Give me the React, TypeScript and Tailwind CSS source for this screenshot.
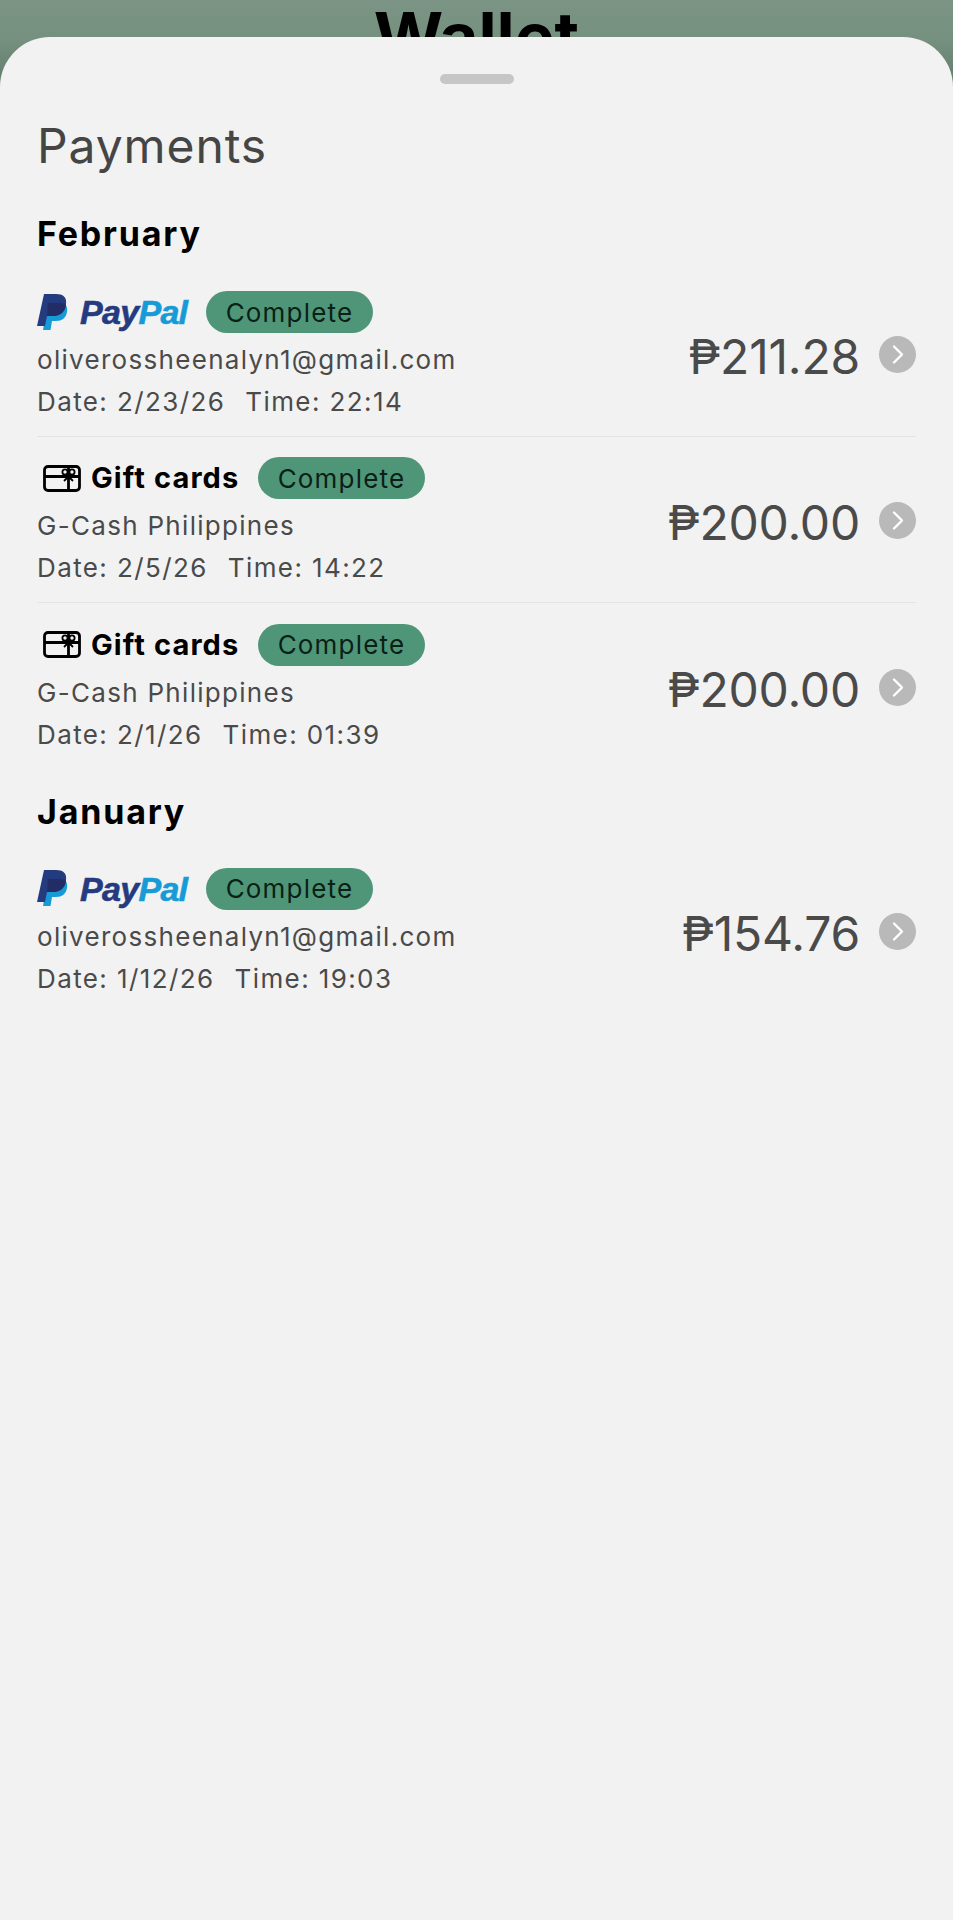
import React from "react";

const font = { fontFamily: "Inter, Roboto, 'Noto Sans', sans-serif" };

function PayPalLogo() {
  return (
    <div className="flex items-center w-[150px] h-[38px] shrink-0">
      <svg width="32" height="37" viewBox="0 0 32 37" className="shrink-0">
        <path d="M11 9h12c5 0 8 3 7 9-1 6-5 9-11 9h-4l-1.500 9H6z" fill="#179bd7" />
        <path d="M7 0h12c7 0 11 3 10 10-1 8-6 12-13 12h-6l-2 10H0z" fill="#253b80" />
        <path d="M11 9h12c3 0 5 1 6 2-1 7-6 11-13 11h-6z" fill="#222d65" />
      </svg>
      <span className="ml-[11px] text-[34px] leading-none font-bold italic tracking-[-0.7px] font-['Liberation_Sans'] [-webkit-text-stroke:0.6px_currentColor]">
        <span className="text-[#253b80]">Pay</span>
        <span className="text-[#179bd7]">Pal</span>
      </span>
    </div>
  );
}

function GiftIcon() {
  return (
    <svg width="38" height="27" viewBox="0 0 38 27" fill="none" stroke="#000" strokeWidth="2.800" className="shrink-0">
      <rect x="1.500" y="1.500" width="35" height="24" rx="3.500" />
      <path d="M1.500 11.500H36.500M25.500 1.500V25.500" />
      <circle cx="22" cy="7" r="2.600" strokeWidth="1.800" />
      <circle cx="29" cy="7" r="2.600" strokeWidth="1.800" />
      <path d="M25.500 11.500l-4.500 4.500M25.500 11.500l4.500 4.500" strokeWidth="1.800" />
    </svg>
  );
}

function Badge() {
  return (
    <span className="flex items-center justify-center w-[167px] h-[42px] rounded-[21px] bg-[#4f9678] text-[#0b1f17] text-[26px] tracking-[1.2px] shrink-0">
      Complete
    </span>
  );
}

function Chevron() {
  return (
    <span className="flex items-center justify-center w-[37px] h-[37px] rounded-full bg-[#b9b9b9] shrink-0">
      <svg width="37" height="37" viewBox="0 0 37 37" fill="none" stroke="#fff" strokeWidth="2.400" strokeLinecap="round" strokeLinejoin="round">
        <path d="M15 10.500l8 8-8 8" />
      </svg>
    </span>
  );
}

type Row = { kind: "paypal" | "gift"; sub: string; date: string; time: string; amount: string };

function PaymentRow({ row, divider }: { row: Row; divider: boolean }) {
  return (
    <div className={`flex items-center h-[166px] ${divider ? "border-b border-[#e4e4e4]" : ""}`}>
      <div className="flex-1 min-w-0 pt-[4px]">
        <div className="flex items-center h-[42px]">
          {row.kind === "paypal" ? (
            <div className="flex items-center gap-[19px]">
              <PayPalLogo />
              <Badge />
            </div>
          ) : (
            <div className="flex items-center">
              <span className="ml-[6px]"><GiftIcon /></span>
              <span className="ml-[10px] text-[29px] font-bold tracking-[1.1px] text-black whitespace-nowrap w-[148px]">Gift cards</span>
              <span className="ml-[19px]"><Badge /></span>
            </div>
          )}
        </div>
        <div className="mt-[9px] text-[26px] leading-[36px] tracking-[1.3px] text-[#4a4a4a] whitespace-nowrap">{row.sub}</div>
        <div className="mt-[6px] text-[26px] leading-[36px] tracking-[1.4px] text-[#4a4a4a] whitespace-nowrap">
          Date: {row.date}
          <span className="ml-[20px]">Time: {row.time}</span>
        </div>
      </div>
      <div className="flex items-center gap-[19px] shrink-0 mt-[2px]">
        <span className="mt-[5px] text-[48px] leading-none text-[#4a4a4a] tracking-[-0.2px] proportional-nums">{row.amount}</span>
        <Chevron />
      </div>
    </div>
  );
}

const february: Row[] = [
  { kind: "paypal", sub: "oliverossheenalyn1@gmail.com", date: "2/23/26", time: "22:14", amount: "₱211.28" },
  { kind: "gift", sub: "G-Cash Philippines", date: "2/5/26", time: "14:22", amount: "₱200.00" },
  { kind: "gift", sub: "G-Cash Philippines", date: "2/1/26", time: "01:39", amount: "₱200.00" },
];
const january: Row[] = [
  { kind: "paypal", sub: "oliverossheenalyn1@gmail.com", date: "1/12/26", time: "19:03", amount: "₱154.76" },
];

export default function App() {
  return (
    <div style={font} className="flex flex-col h-[1920px] w-full overflow-hidden bg-[linear-gradient(to_bottom,#7b9485_0px,#76907f_40px,#5f7a6b_90px)]">
      <header className="h-[37px] shrink-0 overflow-hidden text-center">
        <div className="mt-[-3px] text-[67px] leading-[80px] font-bold text-black">Wallet</div>
      </header>
      <main className="flex-1 rounded-t-[50px] bg-[#f2f2f2] px-[37px]">
        <div className="flex justify-center pt-[37px]">
          <div className="w-[74px] h-[10px] rounded-full bg-[#c6c6c6]" />
        </div>
        <h1 className="mt-[30px] text-[48px] leading-[64px] font-normal text-[#454545] tracking-[0.9px]">Payments</h1>
        <h2 className="mt-[34px] text-[34px] leading-[44px] font-bold text-black tracking-[1.8px]">February</h2>
        <div className="mt-[15px] -mb-[1px]">
          {february.map((r, i) => (
            <PaymentRow key={i} row={r} divider={i < 2} />
          ))}
        </div>
        <h2 className="mt-[22px] text-[34px] leading-[44px] font-bold text-black tracking-[1.8px]">January</h2>
        <div className="mt-[13px]">
          {january.map((r, i) => (
            <PaymentRow key={i} row={r} divider={false} />
          ))}
        </div>
      </main>
    </div>
  );
}
